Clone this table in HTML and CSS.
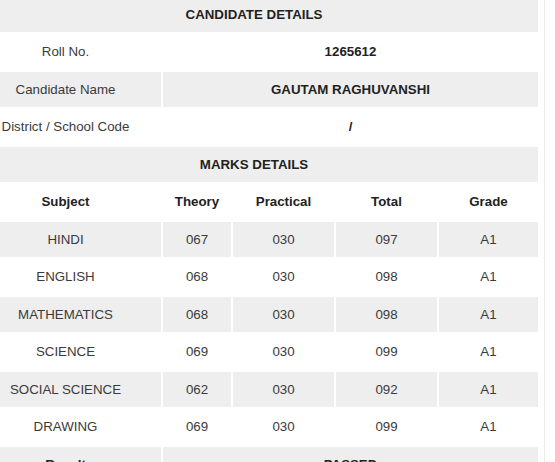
FILE: index.html
```html
<!DOCTYPE html>
<html>
<head>
<meta charset="utf-8">
<link rel="stylesheet" href="styles.css">
</head>
<body>
<div class="frame">
<table class="result">
  <colgroup>
    <col class="c-subject"><col class="c-theory"><col class="c-practical"><col class="c-total"><col class="c-grade">
  </colgroup>
  <tbody>
    <tr><th colspan="5">CANDIDATE DETAILS</th></tr>
    <tr><td>Roll No.</td><td colspan="4" class="val">1265612</td></tr>
    <tr><td>Candidate Name</td><td colspan="4" class="val">GAUTAM RAGHUVANSHI</td></tr>
    <tr><td>District / School Code</td><td colspan="4" class="val">/</td></tr>
    <tr><th colspan="5">MARKS DETAILS</th></tr>
    <tr><th>Subject</th><th>Theory</th><th>Practical</th><th>Total</th><th>Grade</th></tr>
    <tr><td>HINDI</td><td>067</td><td>030</td><td>097</td><td>A1</td></tr>
    <tr><td>ENGLISH</td><td>068</td><td>030</td><td>098</td><td>A1</td></tr>
    <tr><td>MATHEMATICS</td><td>068</td><td>030</td><td>098</td><td>A1</td></tr>
    <tr><td>SCIENCE</td><td>069</td><td>030</td><td>099</td><td>A1</td></tr>
    <tr><td>SOCIAL SCIENCE</td><td>062</td><td>030</td><td>092</td><td>A1</td></tr>
    <tr><td>DRAWING</td><td>069</td><td>030</td><td>099</td><td>A1</td></tr>
    <tr><th>Result</th><td colspan="4" class="val">PASSED</td></tr>
  </tbody>
</table>
</div>
</body>
</html>
```
FILE: styles.css
```css
html, body {
  margin: 0;
  padding: 0;
  background: #ffffff;
  overflow: hidden;
}
body {
  font-family: "Liberation Sans", Arial, sans-serif;
  font-size: 13.3px;
  color: #333333;
}
.frame {
  width: 573px;
  margin: -5.5px 0 0 -32px;
  padding-right: 3px;
  border-right: 1px solid #ececec;
}
.result {
  table-layout: fixed;
  border-collapse: separate;
  border-spacing: 2px;
  width: 572px;
}
.c-subject { width: 191px; }
.c-theory { width: 68px; }
.c-practical { width: 101px; }
.c-total { width: 101px; }
.c-grade { width: 99px; }
.result td, .result th {
  height: 35.5px;
  padding: 0;
  text-align: center;
  vertical-align: middle;
  white-space: nowrap;
  box-sizing: border-box;
}
.result th {
  font-weight: bold;
  color: #222222;
}
.result td {
  font-weight: normal;
  color: #3a3a3a;
}
.result td.val {
  font-weight: bold;
  color: #222222;
}
.result tr:nth-child(odd) td,
.result tr:nth-child(odd) th {
  background: #eeeeee;
}
```
